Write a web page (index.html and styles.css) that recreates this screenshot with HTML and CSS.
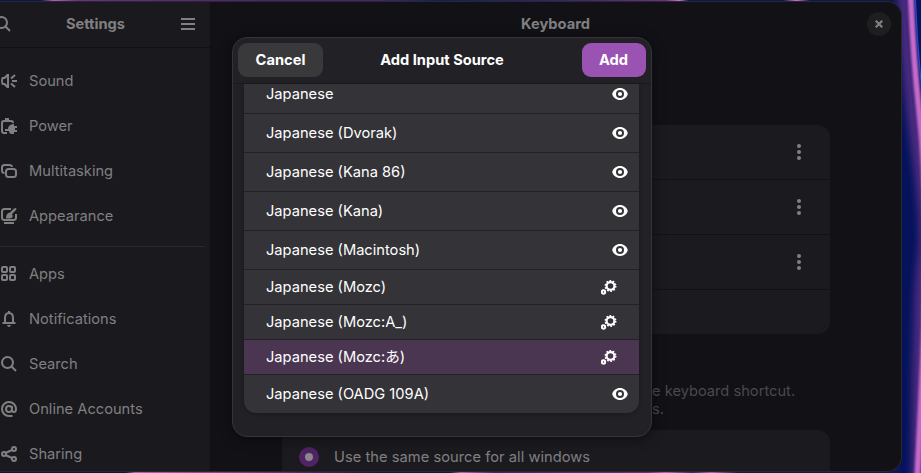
FILE: index.html
```html
<!DOCTYPE html>
<html lang="en">
<head>
<meta charset="utf-8">
<title>Settings</title>
<link rel="stylesheet" href="styles.css">
</head>
<body>
<svg width="0" height="0" class="defs" aria-hidden="true">
  <symbol id="eye" viewBox="0 0 16 16"><path fill-rule="evenodd" d="M8 2C4.200 2 1.100 4.400.200 8c.900 3.600 4 6 7.800 6s6.900-2.400 7.800-6C14.900 4.400 11.800 2 8 2zm0 2a4 4 0 1 1 0 8 4 4 0 0 1 0-8z"/><circle cx="8" cy="8" r="2.100"/></symbol>
  <symbol id="gears" viewBox="0 0 16 16"><circle cx="9.500" cy="7" r="3.900" fill="none" stroke="currentColor" stroke-width="2.200"/><circle cx="9.500" cy="7" r="5.200" fill="none" stroke="currentColor" stroke-width="1.600" stroke-dasharray="1.630 1.637"/><circle cx="2.500" cy="13" r="1.700" fill="none" stroke="currentColor" stroke-width="2"/></symbol>
  <symbol id="search" viewBox="0 0 16 16"><g fill="none" stroke="currentColor" stroke-width="2"><circle cx="6.500" cy="6.500" r="5.500"/><path d="M10.500 10.500 15 15"/></g></symbol>
  <symbol id="dots" viewBox="0 0 16 16"><circle cx="8" cy="2" r="2"/><circle cx="8" cy="8" r="2"/><circle cx="8" cy="14" r="2"/></symbol>
</svg>
<svg class="wallpaper" viewBox="0 0 921 473" aria-hidden="true">
  <defs>
    <filter id="soft" x="-100%" width="300%" y="-10%" height="120%"><feGaussianBlur stdDeviation="4"/></filter>
    <filter id="edge" x="-100%" width="300%" y="-10%" height="120%"><feGaussianBlur stdDeviation="0.9"/></filter>
    <linearGradient id="top"><stop offset="0" stop-color="#071750"/><stop offset=".045" stop-color="#071750"/><stop offset=".06" stop-color="#b95bc6"/><stop offset=".085" stop-color="#6e2d8f"/><stop offset=".3" stop-color="#4b2078"/><stop offset=".42" stop-color="#4b2078"/><stop offset=".49" stop-color="#07206a"/><stop offset=".62" stop-color="#35217c"/><stop offset=".74" stop-color="#6e2d8f"/><stop offset=".755" stop-color="#d070d0"/><stop offset=".765" stop-color="#071750"/><stop offset=".87" stop-color="#071750"/><stop offset=".885" stop-color="#d070d0"/><stop offset=".9" stop-color="#071750"/></linearGradient>
    <linearGradient id="bottom"><stop offset="0" stop-color="#0b1153"/><stop offset=".14" stop-color="#0b1153"/><stop offset=".15" stop-color="#b95bc6"/><stop offset=".3" stop-color="#702b8c"/><stop offset=".42" stop-color="#071750"/><stop offset=".5" stop-color="#071750"/><stop offset=".512" stop-color="#b95bc6"/><stop offset=".55" stop-color="#41217a"/><stop offset=".72" stop-color="#6e2d8f"/><stop offset=".74" stop-color="#b95bc6"/><stop offset=".77" stop-color="#35217c"/><stop offset=".79" stop-color="#b95bc6"/><stop offset=".82" stop-color="#101658"/></linearGradient>
  </defs>
  <rect width="921" height="473" fill="#04135b"/>
  <rect width="900" height="4" fill="url(#top)"/>
  <rect y="468" width="900" height="5" fill="url(#bottom)"/>
  <path d="M903-10Q906 70 917 150T923 260T917 483" fill="none" stroke="#60308a" stroke-width="9" filter="url(#soft)"/>
  <path d="M910.500-10Q913 55 919 110T926 230T917 483" fill="none" stroke="#c66bcb" stroke-width="6" filter="url(#edge)"/>
  <path d="M915-10Q917 48 923 100" fill="none" stroke="#254bd0" stroke-width="1.200"/>
</svg>
<div class="window">
  <aside class="sidebar">
    <header class="side-head">
      <svg class="ico"><use href="#search"/></svg>
      <h1>Settings</h1>
      <svg class="ico menu" viewBox="0 0 16 16"><path d="M1 2h14v2H1zM1 7h14v2H1zM1 12h14v2H1z"/></svg>
    </header>
    <nav>
      <div class="item"><svg class="ico" viewBox="0 0 16 16"><path fill-rule="evenodd" d="M6 1h2v14H6l-3-3H1Q-1 8 1 4h2zM6 4 4 6H2.200q-.6 2 0 4H4l2 2z"/><path d="M11 8h5M10 5.500 14 2M10 10.500l4 3.500" stroke="currentColor" stroke-width="2"/></svg>Sound</div>
      <div class="item"><svg class="ico" viewBox="0 0 16 16"><path d="M6 15H3q-2 0-2-2V5q0-2 2-2h7q2 0 2 2" fill="none" stroke="currentColor" stroke-width="2"/><path d="M4 0h4v3H4zM12 6h1v2h3v2h-2v2h2v2h-3v2h-2q-3 0-3-3H4v-2h3q0-4 5-5z"/></svg>Power</div>
      <div class="item"><svg class="ico line" viewBox="0 0 16 16"><rect x="5" y="6" width="10" height="8" rx="2.500"/><path d="M3.500 10Q1 10 1 7.500v-3Q1 2 3.500 2H8q3 0 3 2"/></svg>Multitasking</div>
      <div class="item"><svg class="ico" viewBox="0 0 16 16"><path d="M10 1H3.500Q1 1 1 3.500v6Q1 12 3.500 12h9q2.500 0 2.500-2.500V6M3 15h10" fill="none" stroke="currentColor" stroke-width="2"/><path d="M15 0q1 1 0 2l-4 4q2 4-2 4.500H5Q5 5 9 4.500l4-4z"/></svg>Appearance</div>
      <hr>
      <div class="item"><svg class="ico line" viewBox="0 0 16 16"><rect x="1" y="1" width="5" height="5" rx="1"/><rect x="9" y="1" width="5" height="5" rx="1"/><rect x="1" y="9" width="5" height="5" rx="1"/><rect x="9" y="9" width="5" height="5" rx="1"/></svg>Apps</div>
      <div class="item"><svg class="ico" viewBox="0 0 16 16"><path d="M1.500 12h13M4 12V7q0-5 4-5t4 5v5" fill="none" stroke="currentColor" stroke-width="2"/><path d="M7 0h2v2H7zM6 14h4q-.6 2-2 2t-2-2z"/></svg>Notifications</div>
      <div class="item"><svg class="ico"><use href="#search"/></svg>Search</div>
      <div class="item"><svg class="ico line" viewBox="0 0 16 16"><circle cx="8" cy="8" r="3"/><path d="M11 5v4q0 2 2 2t2-3A7 7 0 1 0 8 15h3.500"/></svg>Online Accounts</div>
      <div class="item"><svg class="ico line" viewBox="0 0 16 16"><path d="M4.500 7 11 4M4.500 9l6.500 3"/><circle cx="3" cy="8" r="2"/><circle cx="13" cy="3" r="2"/><circle cx="13" cy="13" r="2"/></svg>Sharing</div>
    </nav>
  </aside>
  <main class="content">
    <header class="main-head"><h1>Keyboard</h1><span class="close"><svg viewBox="0 0 8 8"><path d="M.7.700l6.600 6.600M7.300.700.700 7.300" stroke="currentColor" stroke-width="2.200"/></svg></span></header>
    <section class="card sources">
      <div class="source"><svg class="ico"><use href="#dots"/></svg></div>
      <div class="source"><svg class="ico"><use href="#dots"/></svg></div>
      <div class="source"><svg class="ico"><use href="#dots"/></svg></div>
      <div class="source last"></div>
    </section>
    <p class="hint">e keyboard shortcut.<br>s.</p>
    <section class="card option"><span class="radio"></span>Use the same source for all windows</section>
  </main>
</div>
<div class="dialog">
  <header class="dialog-head">
    <button class="btn cancel">Cancel</button>
    <h2>Add Input Source</h2>
    <button class="btn add">Add</button>
  </header>
  <div class="scroll">
    <div class="list">
      <div class="row first">Japanese<svg class="ico"><use href="#eye"/></svg></div>
      <div class="row">Japanese (Dvorak)<svg class="ico"><use href="#eye"/></svg></div>
      <div class="row">Japanese (Kana 86)<svg class="ico"><use href="#eye"/></svg></div>
      <div class="row">Japanese (Kana)<svg class="ico"><use href="#eye"/></svg></div>
      <div class="row">Japanese (Macintosh)<svg class="ico"><use href="#eye"/></svg></div>
      <div class="row engine">Japanese (Mozc)<svg class="ico"><use href="#gears"/></svg></div>
      <div class="row engine">Japanese (Mozc:A_)<svg class="ico"><use href="#gears"/></svg></div>
      <div class="row engine selected">Japanese (Mozc:あ)<svg class="ico"><use href="#gears"/></svg></div>
      <div class="row">Japanese (OADG 109A)<svg class="ico"><use href="#eye"/></svg></div>
    </div>
  </div>
</div>
</body>
</html>
```
FILE: styles.css
```css
* { box-sizing: border-box; }
body {
  margin: 0;
  width: 921px;
  height: 473px;
  overflow: hidden;
  background: #04135b;
  color: #808082;
  font: 14.667px/18px Inter, "Noto Sans CJK JP", sans-serif;
}
h1, h2 { margin: 0; font-size: 14.667px; font-weight: 700; line-height: 18px; }
.defs { position: absolute; }
.wallpaper { position: absolute; inset: 0; width: 921px; height: 473px; }
.ico { width: 16px; height: 16px; flex: none; fill: currentColor; }
.line { fill: none; stroke: currentColor; stroke-width: 2; }

.window {
  position: relative;
  display: flex;
  width: 902px;
  height: 471px;
  margin-top: 1px;
  overflow: hidden;
  background: #121116;
  border: solid #29282c;
  border-width: 1px 1px 1px 0;
  border-radius: 0 15px 15px 0;
}
.sidebar { width: 211px; flex: none; background: #1a191d; border-right: 1px solid #111014; }
.side-head {
  display: flex;
  align-items: center;
  height: 46px;
  padding: 0 14px 1px 0;
  border-bottom: 1px solid #111014;
  justify-content: space-between;
}
.side-head .ico:first-child { margin-left: -5px; }
.side-head h1 { margin-left: 0; }
nav { padding-top: 10px; }
.item { display: flex; align-items: center; gap: 12px; height: 45px; padding-left: 1px; }
nav hr { height: 1px; margin: 8px 5px 4px 0; border: 0; background: #29282c; }

.content { flex: 1; min-width: 0; }
.main-head {
  position: relative;
  display: flex;
  height: 46px;
  padding: 0 1px 2px 0;
  align-items: center;
  justify-content: center;
}
.close {
  position: absolute;
  right: 10px;
  top: 10px;
  display: grid;
  place-items: center;
  width: 24px;
  height: 24px;
  border-radius: 50%;
  background: #1e1e21;
}
.close svg { width: 8px; height: 8px; }
.card { width: 548px; margin-left: 71px; background: #1b1a1e; border-radius: 12px; }
.sources { margin-top: 77px; }
.source {
  display: flex;
  align-items: center;
  justify-content: flex-end;
  height: 55px;
  padding-right: 23px;
  border-bottom: 1px solid #121116;
}
.source.last { height: 44px; border: 0; }
.hint { margin: 48px 0 12px 441px; color: #4a494d; }
.option {
  display: flex;
  align-items: center;
  gap: 15px;
  height: 54px;
  padding-left: 17px;
  letter-spacing: .04px;
}
.radio { width: 20px; height: 20px; border: 6px solid #4f2364; border-radius: 50%; background: #8b858e; }

.dialog {
  position: absolute;
  left: 232px;
  top: 37px;
  width: 420px;
  height: 400px;
  overflow: hidden;
  background: #222126;
  border: 1px solid #353439;
  border-radius: 15px;
  box-shadow: 0 2px 12px 2px rgba(0, 0, 0, .35);
  color: #fff;
}
.dialog-head {
  display: flex;
  align-items: center;
  justify-content: space-between;
  height: 46px;
  padding: 0 5px 2px;
  border-bottom: 1px solid #1b1a1e;
}
.dialog-head h2 { margin-right: 21px; }
.btn {
  height: 34px;
  padding: 0;
  border: 0;
  border-radius: 9px;
  color: #fff;
  font: 700 14.667px/18px Inter, sans-serif;
}
.cancel { width: 85px; background: #39393b; }
.add { width: 64px; padding-right: 1px; background: #9b53b3; }
.scroll { padding: 0 12px 0 11px; }
.list {
  overflow: hidden;
  background: #343337;
  border-radius: 0 0 12px 12px;
  box-shadow: 0 1px 4px rgba(0, 0, 0, .3);
}
.row {
  display: flex;
  align-items: center;
  justify-content: space-between;
  height: 39px;
  padding: 0 11px 0 22px;
  border-bottom: 1px solid #222126;
}
.row.first { height: 30px; padding-bottom: 10px; }
.engine { height: 35px; padding-right: 22px; }
.selected { background: #4b3652; }
.row:last-child { height: 38px; border: 0; }
```
